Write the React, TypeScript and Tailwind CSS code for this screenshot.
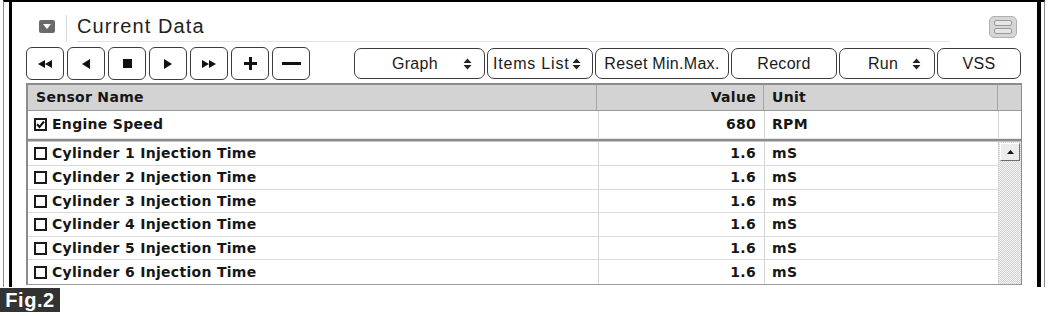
import React from "react";

const SANS = "font-['Liberation_Sans',Arial,sans-serif]";
const BOLD = "font-['DejaVu_Sans',sans-serif] font-bold text-[14px] tracking-[0.3px] text-[#161616]";

function UpDown() {
  return (
    <svg width="9" height="12" viewBox="0 0 9 12" className="inline-block">
      <path d="M4.5 0.5 L8.5 5 L0.5 5 Z" fill="#222" />
      <path d="M4.5 11.5 L8.5 7 L0.5 7 Z" fill="#222" />
    </svg>
  );
}

function NavBtn({ children }: { children: React.ReactNode }) {
  return (
    <div className="w-[38px] h-[33px] border-[1.5px] border-[#3c3c3c] rounded-[6px] bg-white flex items-center justify-center">
      {children}
    </div>
  );
}

function Check({ on }: { on?: boolean }) {
  return (
    <div className="w-[13px] h-[13px] border-2 border-[#1a1a1a] bg-white flex items-center justify-center shrink-0">
      {on && (
        <svg width="9" height="9" viewBox="0 0 9 9">
          <path d="M1 4.3 L3.5 7 L8 1.5" stroke="#111" strokeWidth="2" fill="none" />
        </svg>
      )}
    </div>
  );
}

const rows = [
  { n: 1, h: "h-[24px]" },
  { n: 2, h: "h-[24px]" },
  { n: 3, h: "h-[23px]" },
  { n: 4, h: "h-[24px]" },
  { n: 5, h: "h-[23px]" },
  { n: 6, h: "h-[24px]" },
];

export default function App() {
  return (
    <div className={`w-[1050px] h-[316px] bg-white overflow-hidden ${SANS}`}>
      <div className="ml-[3px] w-[1042px] h-[287px] border-l border-r border-[#8a8a8a] border-t-2 border-t-black flex">
        <div className="ml-[5px] mr-[3px] flex-1 border-l-[3px] border-r-[4px] border-black bg-white flex flex-col">
          {/* header */}
          <div className="h-[40px] flex items-center">
            <div className="ml-[27px] mt-[8px] w-[16px] h-[13px] rounded-[2px] bg-[#6a6a6a] flex items-center justify-center">
              <svg width="8" height="5" viewBox="0 0 8 5">
                <path d="M0 0 L8 0 L4 5 Z" fill="#fff" />
              </svg>
            </div>
            <div className="ml-[11px] self-stretch pt-[13px] flex">
              <div className="w-px bg-[#d8d8d8]" />
            </div>
            <div className="ml-[10px] w-[873px] self-stretch border-b border-[#e2e2e2] flex items-center pt-[9px]">
              <span className="text-[20px] tracking-[1.1px] text-[#222]">Current Data</span>
            </div>
            <div className="ml-[39px] mt-[9px] w-[28px] h-[22px] rounded-[5px] bg-[#d6d6d6] border border-[#b0b0b0] flex flex-col items-center justify-center gap-[2px]">
              <div className="w-[18px] h-[6px] rounded-[2px] bg-[#e6e6e6] border border-[#999]" />
              <div className="w-[18px] h-[6px] rounded-[2px] bg-[#e6e6e6] border border-[#999]" />
            </div>
          </div>

          {/* toolbar */}
          <div className="mt-[5px] ml-[14px] flex items-center h-[33px]">
            <div className="flex gap-[3px]">
              <NavBtn>
                <svg width="14" height="8" viewBox="0 0 14 8">
                  <path d="M0 4 L7 0 L7 8 Z M7 4 L14 0 L14 8 Z" fill="#111" />
                </svg>
              </NavBtn>
              <NavBtn>
                <svg width="8" height="10" viewBox="0 0 8 10">
                  <path d="M0 5 L8 0 L8 10 Z" fill="#111" />
                </svg>
              </NavBtn>
              <NavBtn>
                <div className="w-[9px] h-[9px] bg-[#111]" />
              </NavBtn>
              <NavBtn>
                <svg width="8" height="10" viewBox="0 0 8 10">
                  <path d="M8 5 L0 0 L0 10 Z" fill="#111" />
                </svg>
              </NavBtn>
              <NavBtn>
                <svg width="14" height="8" viewBox="0 0 14 8">
                  <path d="M7 4 L0 0 L0 8 Z M14 4 L7 0 L7 8 Z" fill="#111" />
                </svg>
              </NavBtn>
              <NavBtn>
                <svg width="13" height="13" viewBox="0 0 13 13">
                  <path d="M5 0 H8 V5 H13 V8 H8 V13 H5 V8 H0 V5 H5 Z" fill="#111" />
                </svg>
              </NavBtn>
              <NavBtn>
                <div className="w-[19px] h-[3px] bg-[#111]" />
              </NavBtn>
            </div>
            <div className="ml-[44px] flex gap-[2px] text-[16px] tracking-[0.3px] text-[#1a1a1a]">
              <div className="w-[131px] h-[31px] border-[1.5px] border-[#3c3c3c] rounded-[7px] flex items-center">
                <span className="ml-[37px]">Graph</span>
                <span className="ml-[25px] flex"><UpDown /></span>
              </div>
              <div className="w-[106px] h-[31px] border-[1.5px] border-[#3c3c3c] rounded-[7px] flex items-center">
                <span className="ml-[5px] tracking-[0.8px]">Items List</span>
                <span className="ml-[3px] flex"><UpDown /></span>
              </div>
              <div className="w-[134px] h-[31px] border-[1.5px] border-[#3c3c3c] rounded-[7px] flex items-center justify-center">
                Reset Min.Max.
              </div>
              <div className="w-[106px] h-[31px] border-[1.5px] border-[#3c3c3c] rounded-[7px] flex items-center justify-center">
                Record
              </div>
              <div className="w-[96px] h-[31px] border-[1.5px] border-[#3c3c3c] rounded-[7px] flex items-center">
                <span className="ml-[28px]">Run</span>
                <span className="ml-[14px] flex"><UpDown /></span>
              </div>
              <div className="w-[84px] h-[31px] border-[1.5px] border-[#3c3c3c] rounded-[7px] flex items-center justify-center">
                VSS
              </div>
            </div>
          </div>

          {/* table */}
          <div className="mt-[3px] ml-[14px] w-[996px] border-l-2 border-t-2 border-r border-[#8c8c8c] flex flex-col">
            <div className={`flex h-[26px] bg-[#d3d3d3] border-b border-[#9a9a9a] ${BOLD} text-[#2a2a2a]`}>
              <div className="w-[569px] border-r border-[#a4a4a4] pl-[8px] flex items-center">Sensor Name</div>
              <div className="w-[167px] border-r border-[#a4a4a4] pr-[7px] flex items-center justify-end">Value</div>
              <div className="w-[234px] border-r border-[#a4a4a4] pl-[8px] flex items-center">Unit</div>
              <div className="flex-1" />
            </div>
            <div className={`flex h-[27px] bg-white ${BOLD}`}>
              <div className="w-[571px] border-r border-[#d4d4d4] pl-[6px] flex items-center gap-[5px]">
                <Check on />
                <span>Engine Speed</span>
              </div>
              <div className="w-[166px] border-r border-[#d4d4d4] pr-[8px] flex items-center justify-end">680</div>
              <div className="w-[234px] border-r border-[#d4d4d4] pl-[7px] flex items-center">RPM</div>
              <div className="flex-1" />
            </div>
            <div className="h-[1px] bg-[#e6e6e6]" />
            <div className="h-[3px] bg-[#8a8a8a] border-b border-[#c4c4c4]" />
            <div className="flex border-b border-[#9a9a9a]">
              <div className={`w-[971px] flex flex-col ${BOLD}`}>
                {rows.map(({ n, h }) => (
                  <div key={n} className={`flex ${h} border-b border-[#dadada] last:border-b-0`}>
                    <div className="w-[571px] border-r border-[#d4d4d4] pl-[6px] flex items-center gap-[5px]">
                      <Check />
                      <span>Cylinder {n} Injection Time</span>
                    </div>
                    <div className="w-[166px] border-r border-[#d4d4d4] pr-[8px] flex items-center justify-end">1.6</div>
                    <div className="w-[234px] border-r border-[#d4d4d4] pl-[7px] flex items-center">mS</div>
                  </div>
                ))}
              </div>
              <div className="flex-1 flex flex-col bg-[repeating-conic-gradient(#f4f4f4_0_25%,#d2d2d2_0_50%)] bg-[length:2px_2px]">
                <div className="mx-[1px] mt-[1px] h-[18px] bg-[#ececec] border border-t-white border-l-white border-r-[#6e6e6e] border-b-[#6e6e6e] flex items-center justify-center">
                  <svg width="7" height="4" viewBox="0 0 7 4">
                    <path d="M3.5 0 L7 4 L0 4 Z" fill="#111" />
                  </svg>
                </div>
              </div>
            </div>
          </div>
        </div>
      </div>
      <div className="w-[60px] h-[24px] mt-[1px] bg-[#333] text-white font-bold text-[20px] tracking-[0.6px] flex items-center justify-center leading-none">
        Fig.2
      </div>
    </div>
  );
}
